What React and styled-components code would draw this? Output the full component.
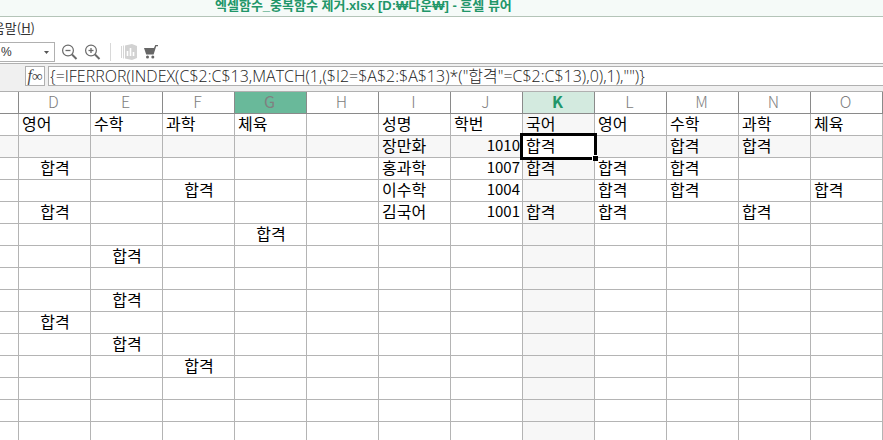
import React, { useState } from 'react'
import styled, { createGlobalStyle } from 'styled-components';

const columns = ["D", "E", "F", "G", "H", "I", "J", "K", "L", "M", "N", "O"];
const hoveredColumn = "G";

const rows = [
  { D: "영어", E: "수학", F: "과학", G: "체육", I: "성명", J: "학번", K: "국어", L: "영어", M: "수학", N: "과학", O: "체육" },
  { I: "장만화", J: 1010, K: "합격", M: "합격", N: "합격" },
  { D: "합격", I: "홍과학", J: 1007, K: "합격", L: "합격", M: "합격" },
  { F: "합격", I: "이수학", J: 1004, L: "합격", M: "합격", O: "합격" },
  { D: "합격", I: "김국어", J: 1001, K: "합격", L: "합격", N: "합격" },
  { G: "합격" },
  { E: "합격" },
  {},
  { E: "합격" },
  { D: "합격" },
  { E: "합격" },
  { F: "합격" },
  {},
  {},
  {},
];

const getAlign = (column, value, rowIndex) => {
  if (typeof value === "number") return "right";
  if (rowIndex > 0 && "DEFG".includes(column)) return "center";
  return "left";
};

function ZoomIcon({ plus }) {
  return (
    <svg width="16" height="16" viewBox="0 0 16 16" fill="none" stroke="#6a6a6a" aria-hidden="true">
      <circle cx="6" cy="6.5" r="5.4" strokeWidth="1.2" />
      <path d="M3.5 6.5h5" strokeWidth="1.3" />
      {plus && <path d="M6 4v5" strokeWidth="1.3" />}
      <path d="M10 10.5l4.5 4.5" strokeWidth="2" />
    </svg>
  );
}

function ChartIcon() {
  return (
    <svg width="16" height="16" viewBox="0 0 16 16" aria-hidden="true">
      <path d="M0.5 2v12M2.5 1.5v13" stroke="#d6d6d6" />
      <path d="M4 1.5L11 0l5 2v12l-5 2-7-1.5z" fill="#d2d2d2" />
      <path d="M6.5 7v5M9.5 4v8M12.5 8v4" stroke="#fff" strokeWidth="1.6" />
    </svg>
  );
}

function CartIcon() {
  return (
    <svg width="14" height="14" viewBox="0 0 14 14" fill="#666" aria-hidden="true">
      <path d="M0 3h10l1.3-3H14v1.2h-1.8L9.6 9.4H2.2z" />
      <circle cx="3.5" cy="12" r="1.5" />
      <circle cx="8.8" cy="12" r="1.5" />
    </svg>
  );
}

function App() {
  const [selected, setSelected] = useState({ column: "K", row: 1 });

  return (
    <>
      <GlobalStyle />
      <Window>
        <TitleBar>
          <Title>엑셀함수_중복함수 제거.xlsx [D:₩다운₩] - 흔셀 뷰어</Title>
        </TitleBar>
        <MenuBar>
          <MenuButton type="button">움말(<u>H</u>)</MenuButton>
        </MenuBar>
        <ToolBar>
          <ZoomField>
            <ZoomSelect aria-label="확대/축소" defaultValue="%">
              <option>%</option>
            </ZoomSelect>
            <Caret viewBox="0 0 5 3" aria-hidden="true"><path d="M0 0h5L2.5 3z" fill="#555" /></Caret>
          </ZoomField>
          <ToolButton type="button" aria-label="축소"><ZoomIcon /></ToolButton>
          <ToolButton type="button" aria-label="확대"><ZoomIcon plus /></ToolButton>
          <Divider />
          <ToolButton type="button" aria-label="차트" disabled><ChartIcon /></ToolButton>
          <ToolButton type="button" aria-label="구매"><CartIcon /></ToolButton>
        </ToolBar>
        <FormulaBar>
          <FunctionButton type="button" aria-label="함수"><i>f</i><small>∞</small></FunctionButton>
          <FormulaInput
            aria-label="수식"
            readOnly
            value={'{=IFERROR(INDEX(C$2:C$13,MATCH(1,($I2=$A$2:$A$13)*("합격"=C$2:C$13),0),1),"")}'}
          />
        </FormulaBar>
        <Sheet>
          <thead>
            <tr>
              <EdgeHead />
              {columns.map((column) => (
                <ColumnHead
                  key={column}
                  scope="col"
                  $hovered={column === hoveredColumn}
                  $active={column === selected.column}
                >
                  {column}
                </ColumnHead>
              ))}
            </tr>
          </thead>
          <tbody>
            {rows.map((row, rowIndex) => (
              <tr key={rowIndex}>
                <Cell $shaded={rowIndex === selected.row} />
                {columns.map((column) => {
                  const isSelected = column === selected.column && rowIndex === selected.row;
                  return (
                    <Cell
                      key={column}
                      $align={getAlign(column, row[column], rowIndex)}
                      $shaded={!isSelected && (column === selected.column || rowIndex === selected.row)}
                      onClick={() => setSelected({ column, row: rowIndex })}
                    >
                      {row[column]}
                      {isSelected && <SelectionFrame />}
                    </Cell>
                  );
                })}
              </tr>
            ))}
          </tbody>
        </Sheet>
      </Window>
    </>
  )
}

const GlobalStyle = createGlobalStyle`
  * {
    box-sizing: border-box;
  }
  body {
    margin: 0;
    overflow: hidden;
    background-color: #fff;
    font-family: "Noto Sans CJK KR", sans-serif;
  }
  button, input, select {
    font-family: inherit;
    margin: 0;
    padding: 0;
  }
`;

const Window = styled.div`
  display: flex;
  flex-direction: column;
  height: 100vh;
  overflow: hidden;
`;

const TitleBar = styled.header`
  flex: none;
  height: 17px;
  padding: 0 215px;
  background-color: #f5faf8;
  border-bottom: 1px solid #b4c4b8;
`;

const Title = styled.h1`
  margin: 0;
  color: #219669;
  font-family: "Liberation Sans", "Noto Sans CJK KR", sans-serif;
  font-size: 13px;
  font-weight: 700;
  line-height: 12px;
  white-space: nowrap;
`;

const MenuBar = styled.nav`
  display: flex;
  flex: none;
  justify-content: flex-end;
  width: 35px;
  height: 22px;
`;

const MenuButton = styled.button`
  flex: none;
  border: 0;
  background: none;
  color: #333;
  font-size: 13px;
  line-height: 20px;
  white-space: nowrap;
`;

const ToolBar = styled.div`
  display: flex;
  flex: none;
  align-items: center;
  gap: 7px;
  height: 25px;
  padding-top: 2px;
  border-bottom: 1px solid #b0b0b0;
`;

const ZoomField = styled.div`
  display: grid;
  align-items: center;
  width: 55px;
  height: 20px;
  border: 1px solid #b0b0b0;
  border-left: 0;
  > * {
    grid-area: 1 / 1;
  }
`;

const ZoomSelect = styled.select`
  width: 100%;
  padding-left: 1px;
  appearance: none;
  border: 0;
  background: none;
  color: #333;
  font-family: "Liberation Sans", sans-serif;
  font-size: 12px;
  line-height: 16px;
`;

const Caret = styled.svg`
  justify-self: end;
  width: 5px;
  height: 3px;
  margin-right: 5px;
  pointer-events: none;
`;

const ToolButton = styled.button`
  display: flex;
  border: 0;
  background: none;
`;

const Divider = styled.span`
  width: 1px;
  height: 18px;
  margin: 0 3px 0 2px;
  background-color: #d8d8d8;
`;

const FormulaBar = styled.div`
  display: flex;
  flex: none;
  gap: 3px;
  height: 28px;
  padding: 2px 0 5px 25px;
  background-color: #f0f0f0;
  border-bottom: 1px solid #b0b0b0;
`;

const FunctionButton = styled.button`
  display: flex;
  align-items: center;
  justify-content: center;
  width: 20px;
  height: 20px;
  border: 1px solid #b0b0b0;
  background-color: #fff;
  color: #444;
  font-family: "Liberation Serif", serif;
  font-size: 16px;
  line-height: 16px;
  small {
    font-size: 15px;
  }
`;

const FormulaInput = styled.input`
  flex: 1;
  min-width: 0;
  height: 20px;
  padding: 0 0 2px 1px;
  border: 1px solid #b0b0b0;
  border-right: 0;
  background-color: #fff;
  color: #222;
  font-family: "Open Sans", "Noto Sans CJK KR", sans-serif;
  font-size: 16px;
  font-weight: 300;
  line-height: 16px;
`;

const Sheet = styled.table`
  width: 100%;
  table-layout: fixed;
  border-collapse: separate;
  border-spacing: 0;
`;

const EdgeHead = styled.td`
  width: 19px;
  height: 22px;
  padding: 0;
  border-right: 1px solid #8a8a8a;
  border-bottom: 1px solid #8a8a8a;
`;

const ColumnHead = styled.th`
  height: 22px;
  padding: 0 2px 3px 0;
  border-right: 1px solid #8a8a8a;
  border-bottom: 1px solid #8a8a8a;
  background-color: ${({ $hovered, $active }) => ($hovered ? "#69b99a" : $active ? "#d3eadf" : "#fff")};
  color: ${({ $active }) => ($active ? "#219669" : "#808080")};
  font-size: 16px;
  font-weight: ${({ $active, $hovered }) => ($active ? 700 : $hovered ? 400 : 300)};
  line-height: 18px;
`;

const Cell = styled.td`
  position: relative;
  height: 22px;
  padding: 0 2px 3px 3px;
  border-right: 1px solid #b4b4b4;
  border-bottom: 1px solid #b4b4b4;
  background-color: ${({ $shaded }) => ($shaded ? "#f7f7f7" : "#fff")};
  color: #000;
  font-size: ${({ $align }) => ($align === "right" ? "15px" : "16px")};
  line-height: 18px;
  text-align: ${({ $align }) => $align || "left"};
  white-space: nowrap;
`;

const SelectionFrame = styled.span`
  position: absolute;
  inset: -3px;
  z-index: 1;
  border: 3px solid #000;
  pointer-events: none;
  &::after {
    content: "";
    position: absolute;
    right: -4px;
    bottom: -4px;
    width: 5px;
    height: 5px;
    border-top: 1px solid #fff;
    border-left: 1px solid #fff;
    background-color: #000;
  }
`;

export default App
